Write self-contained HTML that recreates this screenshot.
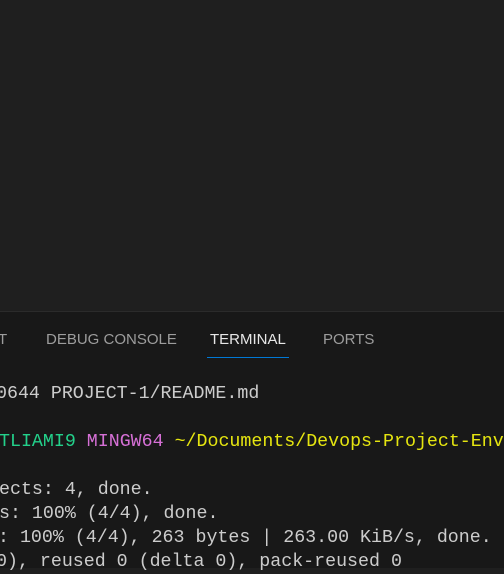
<!DOCTYPE html>
<html><head><style>
body{margin:0;width:504px;height:567px;background:#1f1f1f;overflow:hidden;position:relative}
.panel{position:absolute;top:311px;left:0;width:504px;height:256px;background:#181818;border-top:1px solid #2b2b2b}
.tab{position:absolute;top:331px;font:15px "Liberation Sans",sans-serif;color:#9d9d9d;white-space:nowrap}
.ul{position:absolute;top:357px;left:207px;width:82px;height:1px;background:#0078d4}
.l{position:absolute;font:18.3px/24px "Liberation Mono",monospace;color:#cccccc;white-space:pre}
</style></head><body>
<div class="panel"></div>
<div class="tab" style="left:-2px">T</div>
<div class="tab" style="left:46px">DEBUG CONSOLE</div>
<div class="tab" style="left:210px;color:#e7e7e7">TERMINAL</div>
<div class="tab" style="left:323px">PORTS</div>
<div class="ul"></div>
<div class="l" style="top:382px;left:-4px">0644 PROJECT-1/README.md</div>
<div class="l" style="top:430px;left:-1px"><span style="color:#23d18b">TLIAMI9</span> <span style="color:#d670d6">MINGW64</span> <span style="color:#e5e510">~/Documents/Devops-Project-Env</span></div>
<div class="l" style="top:478px;left:-1px">ects: 4, done.</div>
<div class="l" style="top:502px;left:-1px">s: 100% (4/4), done.</div>
<div class="l" style="top:526px;left:-2px">: 100% (4/4), 263 bytes | 263.00 KiB/s, done.</div>
<div class="l" style="top:550px;left:-4px">0), reused 0 (delta 0), pack-reused 0</div>
</body></html>
